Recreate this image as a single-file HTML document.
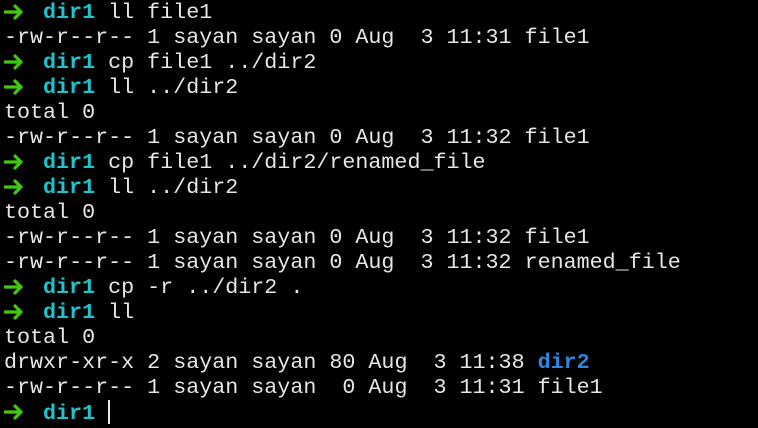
<!DOCTYPE html><html><head><style>
body{margin:0;background:#000;width:758px;height:428px;overflow:hidden}
pre{margin:0;padding:0 0 0 4px;font-family:"Liberation Mono",monospace;font-size:21.7px;line-height:25px;color:#e6e6e6;position:relative;top:0px}
.g{display:inline-block;width:13px;height:25px;vertical-align:top;position:relative}
.g svg{position:absolute;left:0;top:4px}
.c{color:#1ec4cc;font-weight:bold}.b{color:#2f86dc;font-weight:bold}
.cur{display:inline-block;width:2px;height:24px;background:#e6e6e6;vertical-align:-5px}
</style></head><body><pre><span class="g"><svg width="20" height="16" viewBox="0 0 20 16"><path d="M1 8H17M11 2L17 8L11 14" stroke="#3fc90f" stroke-width="3.2" fill="none" stroke-linecap="round" stroke-linejoin="round"/></svg></span>  <span class="c">dir1</span> ll file1
-rw-r--r-- 1 sayan sayan 0 Aug  3 11:31 file1
<span class="g"><svg width="20" height="16" viewBox="0 0 20 16"><path d="M1 8H17M11 2L17 8L11 14" stroke="#3fc90f" stroke-width="3.2" fill="none" stroke-linecap="round" stroke-linejoin="round"/></svg></span>  <span class="c">dir1</span> cp file1 ../dir2
<span class="g"><svg width="20" height="16" viewBox="0 0 20 16"><path d="M1 8H17M11 2L17 8L11 14" stroke="#3fc90f" stroke-width="3.2" fill="none" stroke-linecap="round" stroke-linejoin="round"/></svg></span>  <span class="c">dir1</span> ll ../dir2
total 0
-rw-r--r-- 1 sayan sayan 0 Aug  3 11:32 file1
<span class="g"><svg width="20" height="16" viewBox="0 0 20 16"><path d="M1 8H17M11 2L17 8L11 14" stroke="#3fc90f" stroke-width="3.2" fill="none" stroke-linecap="round" stroke-linejoin="round"/></svg></span>  <span class="c">dir1</span> cp file1 ../dir2/renamed_file
<span class="g"><svg width="20" height="16" viewBox="0 0 20 16"><path d="M1 8H17M11 2L17 8L11 14" stroke="#3fc90f" stroke-width="3.2" fill="none" stroke-linecap="round" stroke-linejoin="round"/></svg></span>  <span class="c">dir1</span> ll ../dir2
total 0
-rw-r--r-- 1 sayan sayan 0 Aug  3 11:32 file1
-rw-r--r-- 1 sayan sayan 0 Aug  3 11:32 renamed_file
<span class="g"><svg width="20" height="16" viewBox="0 0 20 16"><path d="M1 8H17M11 2L17 8L11 14" stroke="#3fc90f" stroke-width="3.2" fill="none" stroke-linecap="round" stroke-linejoin="round"/></svg></span>  <span class="c">dir1</span> cp -r ../dir2 .
<span class="g"><svg width="20" height="16" viewBox="0 0 20 16"><path d="M1 8H17M11 2L17 8L11 14" stroke="#3fc90f" stroke-width="3.2" fill="none" stroke-linecap="round" stroke-linejoin="round"/></svg></span>  <span class="c">dir1</span> ll
total 0
drwxr-xr-x 2 sayan sayan 80 Aug  3 11:38 <span class="b">dir2</span>
-rw-r--r-- 1 sayan sayan  0 Aug  3 11:31 file1
<span class="g"><svg width="20" height="16" viewBox="0 0 20 16"><path d="M1 8H17M11 2L17 8L11 14" stroke="#3fc90f" stroke-width="3.2" fill="none" stroke-linecap="round" stroke-linejoin="round"/></svg></span>  <span class="c">dir1</span> <span class="cur"></span></pre></body></html>
